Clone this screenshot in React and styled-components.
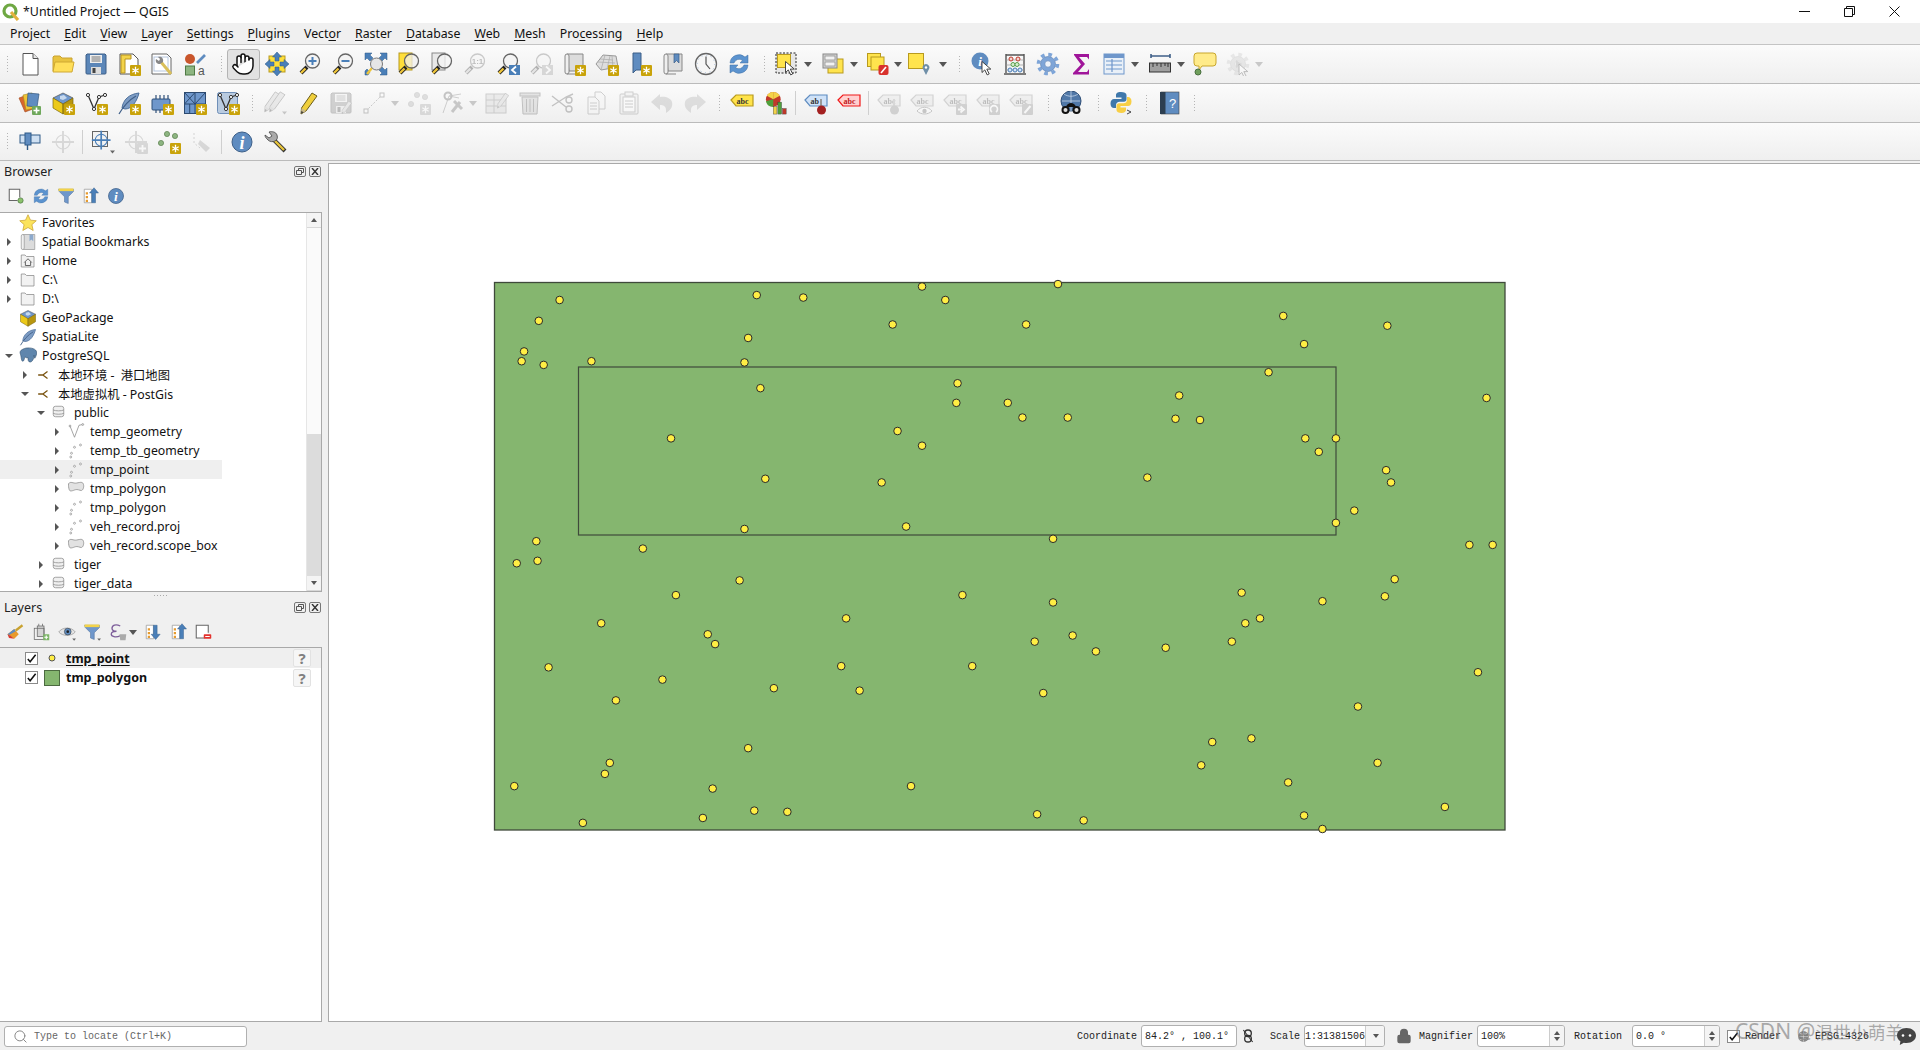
import React from "react";
import styled, { createGlobalStyle } from "styled-components";
import { Hand, Lock, Search } from "lucide-react";

const GlobalStyle = createGlobalStyle`
  html, body {
    margin: 0;
    padding: 0;
    overflow: hidden;
    background: #f0f0f0;
  }
  * { box-sizing: border-box; }
`;

const UI_FONT = `"Noto Sans", "Noto Sans CJK SC", sans-serif`;
const MONO_FONT = `"Liberation Mono", monospace`;

const Window = styled.div`
  width: 1920px;
  height: 1050px;
  display: flex;
  flex-direction: column;
  position: relative;
  overflow: hidden;
  font-family: ${UI_FONT};
  font-size: 13px;
  color: #111;
  background: #f0f0f0;
`;

/* title bar */
const TitleBar = styled.div`
  height: 23px;
  background: #fff;
  display: flex;
  align-items: center;
  padding-left: 2px;
  flex: none;
`;
const TitleText = styled.span`
  margin-left: 3px;
  font-size: 12.4px;
`;
const WinButtons = styled.div`
  margin-left: auto;
  display: flex;
  padding-right: 3px;
`;
const WinButton = styled.div`
  width: 45px;
  height: 21px;
  display: flex;
  align-items: center;
  justify-content: center;
`;

/* menu */
const MenuBar = styled.div`
  height: 22px;
  flex: none;
  display: flex;
  align-items: center;
  padding-left: 3px;
  background: #f0f0f0;
  border-bottom: 1px solid #c4c4c4;
`;
const MenuItem = styled.span`
  padding: 0 7px;
  font-size: 12.3px;
  u { text-underline-offset: 2px; }
`;

/* toolbars */
const ToolRow = styled.div`
  height: ${(p) => p.$h || 39}px;
  flex: none;
  display: flex;
  align-items: center;
  background: linear-gradient(#fbfbfb, #efefef);
  border-bottom: 1px solid #bbb;
`;
const Grip = styled.div`
  width: ${(p) => p.$w}px;
  height: 100%;
  flex: none;
  display: flex;
  align-items: center;
  justify-content: flex-end;
  padding-right: 4px;
  &::after {
    content: "";
    width: 3px;
    height: 19px;
    background-image: radial-gradient(circle, #b5b5b5 0.8px, transparent 0.9px);
    background-size: 3px 3px;
  }
`;
const Divider = styled.div`
  width: ${(p) => p.$w}px;
  height: 100%;
  flex: none;
  display: flex;
  align-items: center;
  justify-content: center;
  &::after {
    content: "";
    width: 1px;
    height: 24px;
    background: #cfcfcf;
  }
`;
const Tool = styled.div`
  width: ${(p) => p.$w || 33}px;
  height: 31px;
  flex: none;
  display: flex;
  align-items: center;
  border: 1px solid ${(p) => (p.$active ? "#b4b4b4" : "transparent")};
  border-radius: 3px;
  background: ${(p) => (p.$active ? "#e2e2e2" : "transparent")};
  padding-left: ${(p) => (p.$active ? 3 : 4)}px;
`;
const ToolFace = styled.div`
  width: 24px;
  height: 24px;
  flex: none;
  display: flex;
  ${(p) => p.$off && "filter: grayscale(1) opacity(0.32);"}
`;
const DropArrow = styled.div`
  width: 0;
  height: 0;
  flex: none;
  margin-left: ${(p) => p.$ml}px;
  border-left: 4px solid transparent;
  border-right: 4px solid transparent;
  border-top: 5px solid ${(p) => (p.$off ? "#c8c8c8" : "#555")};
`;

/* body */
const Body = styled.div`
  flex: 1;
  display: flex;
  min-height: 0;
  padding-top: 2px;
`;
const Side = styled.div`
  width: 322px;
  flex: none;
  display: flex;
  flex-direction: column;
`;
const DockHead = styled.div`
  height: 18px;
  flex: none;
  display: flex;
  align-items: center;
  padding: 0 0 2px 4px;
  font-size: 12.5px;
  color: #222;
`;
const DockBtns = styled.div`
  margin-left: auto;
  display: flex;
  gap: 3px;
  padding-right: 1px;
`;
const DockBtn = styled.div`
  width: 12px;
  height: 11px;
  border: 1px solid #777;
  border-radius: 2px;
  display: flex;
  align-items: center;
  justify-content: center;
`;
const DockTools = styled.div`
  height: ${(p) => p.$h}px;
  flex: none;
  display: flex;
  align-items: center;
  padding-bottom: ${(p) => (p.$h > 30 ? 1 : 0)}px;
`;
const DockTool = styled.div`
  width: ${(p) => p.$w}px;
  flex: none;
  display: flex;
  align-items: center;
  justify-content: flex-end;
`;
const TreeBox = styled.div`
  height: 380px;
  flex: none;
  display: flex;
  background: #fff;
  border: 1px solid #a9a9a9;
  border-left: 0;
`;
const TreeRows = styled.div`
  flex: 1;
  min-width: 0;
  overflow: hidden;
`;
const Row = styled.div`
  height: 19px;
  display: flex;
  align-items: center;
  position: relative;
  width: ${(p) => (p.$sel ? "222px" : "100%")};
  background: ${(p) => (p.$sel ? "#efefef" : "transparent")};
  padding-left: ${(p) => p.$lvl * 16 + 4}px;
  font-size: 12.3px;
`;
const Caret = styled.span`
  width: 10px;
  flex: none;
  display: flex;
  justify-content: center;
`;
const RowIcon = styled.span`
  width: 20px;
  margin-left: 4px;
  flex: none;
  display: flex;
  justify-content: center;
`;
const RowLabel = styled.span`
  margin-left: 4px;
  white-space: pre;
`;
const Scroll = styled.div`
  width: 15px;
  flex: none;
  display: flex;
  flex-direction: column;
  border-left: 1px solid #e6e6e6;
`;
const ScrollEnd = styled.div`
  height: 15px;
  flex: none;
  display: flex;
  align-items: center;
  justify-content: center;
  background: #f4f4f4;
  border-bottom: 1px solid #d8d8d8;
`;
const ScrollTrack = styled.div`
  height: ${(p) => p.$h}px;
  flex: none;
  background: #fafafa;
`;
const ScrollThumb = styled.div`
  flex: 1;
  background: #dcdcdc;
`;
const Splitter = styled.div`
  height: 7px;
  flex: none;
  display: flex;
  align-items: center;
  justify-content: center;
  &::after {
    content: "";
    width: 16px;
    height: 1px;
    background-image: radial-gradient(circle, #aaa 0.6px, transparent 0.7px);
    background-size: 3px 1px;
  }
`;
const LayerBox = styled.div`
  flex: 1;
  background: #fff;
  border: 1px solid #a9a9a9;
  border-left: 0;
`;
const LayerRow = styled.div`
  height: ${(p) => p.$h}px;
  display: flex;
  align-items: center;
  background: ${(p) => (p.$sel ? "#efefef" : "#fff")};
  padding-left: 25px;
  font-weight: 700;
  font-size: 12.5px;
  u { text-underline-offset: 2px; }
`;
const Check = styled.div`
  width: 13px;
  height: 13px;
  flex: none;
  border: 1px solid #8a8a8a;
  background: #fff;
  display: flex;
  align-items: center;
  justify-content: center;
`;
const Swatch = styled.div`
  width: 16px;
  height: 16px;
  margin-left: 6px;
  flex: none;
  display: flex;
  align-items: center;
  justify-content: center;
  ${(p) => p.$fill && `background: ${p.$fill}; border: 1px solid #4c6a40;`}
`;
const LayerName = styled.span`
  margin-left: 6px;
`;
const Unknown = styled.div`
  margin-left: auto;
  margin-right: 10px;
  width: 18px;
  height: 18px;
  border: 1px solid #e2e2e2;
  border-radius: 2px;
  background: #f6f6f6;
  display: flex;
  align-items: center;
  justify-content: center;
  font-weight: 700;
  font-size: 15px;
  color: #808080;
`;

/* map */
const MapCanvas = styled.div`
  width: 1592px;
  margin-left: 6px;
  flex: none;
  background: #fff;
  border: 1px solid #a9a9a9;
  border-right: 0;
  overflow: hidden;
  display: flex;
`;

/* status */
const StatusBar = styled.div`
  height: 28px;
  flex: none;
  display: flex;
  align-items: center;
  padding-left: 4px;
  font-family: ${MONO_FONT};
  font-size: 10px;
  color: #222;
`;
const Locator = styled.div`
  width: 243px;
  height: 21px;
  flex: none;
  display: flex;
  align-items: center;
  background: #fff;
  border: 1px solid #b0b0b0;
  border-radius: 3px;
  padding-left: 8px;
  color: #666;
  gap: 6px;
`;
const StatLabel = styled.span`
  margin-left: ${(p) => p.$ml}px;
  flex: none;
`;
const Field = styled.div`
  width: ${(p) => p.$w}px;
  height: 22px;
  margin-left: ${(p) => p.$ml || 4}px;
  flex: none;
  display: flex;
  align-items: center;
  background: #fff;
  border: 1px solid #b0b0b0;
  border-radius: 3px;
  overflow: hidden;
  padding-left: ${(p) => (p.$pad === undefined ? 3 : p.$pad)}px;
  white-space: pre;
`;
const FieldEnd = styled.div`
  margin-left: auto;
  width: ${(p) => p.$w}px;
  height: 100%;
  flex: none;
  border-left: 1px solid #ccc;
  background: #f4f4f4;
  display: flex;
  flex-direction: column;
  align-items: center;
  justify-content: center;
  gap: 2px;
`;
const Arrow = styled.div`
  width: 0;
  height: 0;
  border-left: 3.5px solid transparent;
  border-right: 3.5px solid transparent;
  ${(p) => (p.$up ? "border-bottom" : "border-top")}: 4px solid #555;
`;
const StatIcon = styled.div`
  margin-left: ${(p) => p.$ml}px;
  flex: none;
  display: flex;
`;
const StatCheck = styled(Check)`
  margin-left: 7px;
`;
const Watermark = styled.div`
  position: absolute;
  left: 1735px;
  bottom: 5px;
  font-family: ${UI_FONT};
  font-size: 21px;
  line-height: 26px;
  white-space: pre;
  color: rgba(120, 120, 120, 0.6);
`;
const WatermarkName = styled.span`
  font-size: 17.5px;
`;
const WatermarkBubble = styled.div`
  position: absolute;
  left: 1897px;
  top: 1028px;
  display: flex;
`;

/* ---- icon parts ---- */
const txt = { fontFamily: "Liberation Sans, sans-serif" };
const smallDrop = <path d="M19 20.500h5l-2.500 3z" fill="#666" />;
const badge = (
  <g>
    <rect x="13" y="13" width="11" height="11" rx="1" fill="#c9a30a" />
    <path d="M18.500 14.800v7.400M15.300 16.700l6.400 3.600M21.700 16.700l-6.400 3.600" stroke="#fff" strokeWidth="1.300" />
  </g>
);
const mag = (fill = "#f4f4f4") => (
  <g>
    <path d="M9 15L3 21" stroke="#222" strokeWidth="4" />
    <path d="M7.500 16.500L3 21" stroke="#eec53a" strokeWidth="2.400" />
    <circle cx="14.500" cy="9" r="7" fill={fill} stroke="#666" strokeWidth="1.300" />
  </g>
);
const cursor = (x, y) => (
  <path transform={`translate(${x} ${y})`} d="M0 0v11l2.800-2.600 2.400 5 2-1-2.400-4.800h4z" fill="#fff" stroke="#333" strokeWidth=".9" />
);
const scroll = (
  <g>
    <path d="M5 2h16v17H7z" fill="#dcdcdc" stroke="#888" />
    <rect x="3" y="2" width="4" height="20" rx="2" fill="#efefef" stroke="#888" />
    <path d="M5 22h10" stroke="#888" />
  </g>
);
const floppy = (
  <g>
    <path d="M3 2h18l1 1v18a1 1 0 0 1-1 1H3a1 1 0 0 1-1-1V3z" fill="#5b86b8" stroke="#3d5f88" />
    <rect x="6" y="3" width="12" height="8" fill="#eee" />
    <path d="M7.500 5h9M7.500 7h9M7.500 9h9" stroke="#777" />
    <rect x="7" y="15" width="10" height="7" fill="#ddd" />
    <rect x="8.500" y="16" width="3" height="5" fill="#444" />
  </g>
);
const pencil = (
  <g>
    <path d="M16 2l5 3-11 15-5 3 .5-6z" fill="#f0cf3c" stroke="#6a5c1c" />
    <path d="M5 23l.5-6 4.500 3z" fill="#c9b98a" />
    <path d="M5 23l.4-3 2 1.300z" fill="#333" />
  </g>
);
const tag = (fill, stroke, label, color) => (
  <g>
    <path d="M1 9l5-5h17v11H6z" fill={fill} stroke={stroke} strokeWidth="1.200" />
    <text x="6.500" y="12.500" fontSize="8" fontWeight="700" fontFamily="Liberation Serif, serif" fill={color}>{label}</text>
  </g>
);
const grayTag = (extra) => (
  <g>
    {tag("#ddd", "#888", "abc", "#444")}
    {extra}
  </g>
);
const gearShape = (fill, edge) => (
  <g>
    <circle cx="12" cy="12" r="9.500" fill="none" stroke={fill} strokeWidth="3.600" strokeDasharray="3.700 3.760" />
    <circle cx="12" cy="12" r="7.500" fill={fill} stroke={edge} strokeWidth=".6" />
    <circle cx="12" cy="12" r="3.200" fill="#eef3fa" stroke={edge} strokeWidth=".6" />
  </g>
);
const crosshair = (c) => (
  <g fill="none" stroke={c}>
    <circle cx="12" cy="12" r="7" strokeWidth="1.200" />
    <path d="M12 1v22M1 12h22" strokeWidth="2" />
  </g>
);
const vNodes = (
  <g>
    <path d="M4 4l6 14 5-12 6-2" fill="none" stroke="#333" strokeWidth="1.300" />
    <g fill="#fff" stroke="#333">
      <circle cx="4" cy="4" r="1.600" />
      <circle cx="10" cy="18" r="1.600" />
      <circle cx="15" cy="6" r="1.600" />
      <circle cx="21" cy="4" r="1.600" />
    </g>
  </g>
);
const dots = (c = "#8db581", edge = "#5a7f4d") => (
  <g fill={c} stroke={edge} strokeWidth=".7">
    <circle cx="4" cy="13" r="2.600" />
    <circle cx="10" cy="4" r="2.600" />
    <circle cx="18" cy="6" r="2.600" />
  </g>
);
const featherShape = (
  <g>
    <path d="M22 2C12 3 6 9 5 17l3 1C15 18 20 10 22 2z" fill="#7d9cc4" stroke="#4c6f9b" />
    <path d="M2 23C6 16 12 9 19 5" fill="none" stroke="#3f5f88" strokeWidth="1.200" />
  </g>
);
const gpkgBox = (
  <g>
    <path d="M12 2l10 5-10 6L2 7z" fill="#6f97cb" stroke="#555" strokeWidth=".7" />
    <path d="M9 5l4-1 3 3-4 2-3-1z" fill="#c7d9ee" />
    <path d="M2 7l10 6v10L2 17z" fill="#ecc918" stroke="#7a6810" strokeWidth=".7" />
    <path d="M22 7l-10 6v10l10-6z" fill="#b8960f" stroke="#7a6810" strokeWidth=".7" />
  </g>
);
const tree = (arrowUp) => (
  <g>
    <path d="M3 3h10v18H3z" fill="#fff" stroke="#999" />
    <g fill="#e69b2f">
      <rect x="5" y="7" width="3" height="3" />
      <rect x="5" y="12" width="3" height="3" />
      <rect x="5" y="17" width="3" height="3" />
    </g>
    <path d={arrowUp ? "M16 1l6 7h-4v13h-5V8h-3z" : "M15.500 22l6-7h-4V3h-5v12h-3z"} fill="#4a7fb8" stroke="#2f5a88" strokeWidth=".6" />
  </g>
);
const funnel = (
  <g>
    <path d="M2 3h20v3l-7 7v9l-5-2v-7L3 6z" fill="#6f97cb" stroke="#4c6f9b" strokeWidth=".7" />
    <rect x="2" y="2" width="20" height="3.500" fill="#f3d34a" />
  </g>
);
const polygonShape = (
  <path d="M2 5c3-4 6 0 11-1s8-2 9 2-1 8-3 8-5-2-8-1-7 3-8 0-1-5-1-8z" fill="#e2e2e2" stroke="#888" />
);
const pointsShape = (
  <g fill="#fff" stroke="#888" strokeWidth=".9">
    <circle cx="5" cy="20" r="1.300" />
    <circle cx="6" cy="15" r="1.300" />
    <circle cx="10" cy="7" r="1.300" />
    <circle cx="18" cy="4" r="1.300" />
  </g>
);
const dbShape = (
  <g fill="#f0f0f0" stroke="#888">
    <rect x="3" y="3" width="14" height="14" rx="3" />
    <path d="M3 8c3 1.500 11 1.500 14 0M3 12.500c3 1.500 11 1.500 14 0" fill="none" />
  </g>
);
const folderShape = (
  <path d="M3 4h5l2 2h10v14H3z" fill="#f2f2f2" stroke="#888" />
);
const info = (size = 20) => (
  <g>
    <circle cx="12" cy="12" r={size / 2} fill="#5f8cc0" stroke="#3d5f88" />
    <text x="12" y={12 + size * 0.33} textAnchor="middle" fontSize={size * 0.9} fontWeight="700" fontStyle="italic" fontFamily="Liberation Serif, serif" fill="#fff">i</text>
  </g>
);
const refresh = (
  <g fill="#5b93cf" stroke="#3f6fa3" strokeWidth=".5">
    <path d="M3 11a9 9 0 0 1 15-6l3-2v8h-8l2.500-2.600A5.500 5.500 0 0 0 7 11z" />
    <path d="M21 13a9 9 0 0 1-15 6l-3 2v-8h8l-2.500 2.600A5.500 5.500 0 0 0 17 13z" />
  </g>
);

const ICONS = {
  new: (
    <g>
      <path d="M5 1.500h10l5 5V23H5z" fill="#fff" stroke="#555" />
      <path d="M15 1.500v5h5" fill="#e6e6e6" stroke="#555" />
    </g>
  ),
  open: (
    <g>
      <path d="M2 19V5l1-1h6l2 2h10v4" fill="#e8c33f" stroke="#c9a230" />
      <path d="M2 20l2-10h19l-2 10z" fill="#ffdf5a" stroke="#cfa832" />
    </g>
  ),
  save: floppy,
  layout: (
    <g>
      <path d="M3 2h13l5 5v15H3z" fill="#fff" stroke="#555" />
      <path d="M4 3h10v4H8v14H4z" fill="#f3d34a" stroke="#b8941e" />
      {badge}
    </g>
  ),
  layoutMgr: (
    <g>
      <path d="M2 2h15l4 4v16H2z" fill="#fff" stroke="#666" />
      <rect x="4" y="5" width="14" height="14" fill="none" stroke="#b5c6de" />
      <path d="M11 10l10 12" stroke="#d9bf5a" strokeWidth="3" />
      <path d="M8 5c3-1 6 1 5 5l-3 2c-3 0-5-2-4-5l3 2 1-2z" fill="#888" />
    </g>
  ),
  style: (
    <g>
      <circle cx="7" cy="7" r="5" fill="#c9562c" />
      <path d="M14 11l8-8" stroke="#5f8cc0" strokeWidth="2.600" />
      <rect x="2.500" y="14" width="9" height="9" fill="#8db581" stroke="#4f7a45" />
      <text x="15" y="22.500" fontSize="12" fill="#555" style={txt}>a</text>
    </g>
  ),
  hand: <Hand x="0" y="0" width="24" height="24" fill="#fff" stroke="#111" strokeWidth="1.500" />,
  panSel: (
    <g>
      <rect x="4" y="4" width="16" height="16" fill="#ffdf3a" stroke="#b89a1e" />
      <g fill="#4a7fb8" stroke="#2f5a88" strokeWidth=".5">
        <path d="M12 0l4.500 5H14v4h-4V5H7.500z" />
        <path d="M12 24l4.500-5H14v-4h-4v4H7.500z" />
        <path d="M0 12l5-4.500V10h4v4H5v2.500z" />
        <path d="M24 12l-5-4.500V10h-4v4h4v2.500z" />
      </g>
    </g>
  ),
  zoomIn: (
    <g>
      {mag()}
      <path d="M14.500 5v8M10.500 9h8" stroke="#4a7fb8" strokeWidth="2" />
    </g>
  ),
  zoomOut: (
    <g>
      {mag()}
      <path d="M10.500 9h8" stroke="#4a7fb8" strokeWidth="2" />
    </g>
  ),
  zoomFull: (
    <g>
      <g fill="#4a7fb8" stroke="#2f5a88" strokeWidth=".5">
        <path d="M1 1h7l-2 2 3 3-3 3-3-3-2 2z" />
        <path d="M23 1h-7l2 2-3 3 3 3 3-3 2 2z" />
        <path d="M23 23h-7l2-2-3-3 3-3 3 3 2-2z" />
        <path d="M1 23h3l2-3-3-3-2 2z" />
      </g>
      <path d="M8 16l-5 6" stroke="#eec53a" strokeWidth="2.400" />
      <circle cx="12.500" cy="12" r="6" fill="#e6e6e6" stroke="#777" />
    </g>
  ),
  zoomSel: (
    <g>
      <rect x="2" y="1" width="13" height="17" fill="#ffdf3a" stroke="#b89a1e" />
      {mag("rgba(240,240,240,.75)")}
    </g>
  ),
  zoomLayer: (
    <g>
      <rect x="2" y="1" width="13" height="17" fill="#e8e8e8" stroke="#888" />
      {mag("rgba(245,245,245,.75)")}
    </g>
  ),
  zoom11: (
    <g>
      {mag()}
      <text x="14.500" y="12" textAnchor="middle" fontSize="8" fontWeight="700" fill="#444" style={txt}>1:1</text>
    </g>
  ),
  zoomLast: (
    <g>
      {mag()}
      <rect x="13" y="13" width="11" height="10" fill="#4a7fb8" />
      <path d="M20 14.500L16 18l4 3.500" fill="none" stroke="#fff" strokeWidth="1.800" />
    </g>
  ),
  zoomNext: (
    <g>
      {mag()}
      <rect x="13" y="13" width="11" height="10" fill="#999" />
      <path d="M17 14.500L21 18l-4 3.500" fill="none" stroke="#fff" strokeWidth="1.800" />
    </g>
  ),
  newMap: (
    <g>
      {scroll}
      {badge}
    </g>
  ),
  map3d: (
    <g>
      <path d="M1 12L8 3l13 1 2 11-17 3z" fill="#ddd" stroke="#999" />
      <path d="M5 7l13 1M3 10l17 1M6 18L10 3M12 17l3-13M18 16l-1-12" stroke="#aaa" strokeWidth=".7" fill="none" />
      {badge}
    </g>
  ),
  newBook: (
    <g>
      <path d="M5 1h8v17l-5 0-3 3z" fill="#5f8cc0" stroke="#3d5f88" />
      {badge}
    </g>
  ),
  books: (
    <g>
      {scroll}
      <path d="M13 2h5v9l-2.500-2.500L13 11z" fill="#5f8cc0" stroke="#3d5f88" strokeWidth=".7" />
    </g>
  ),
  clock: (
    <g>
      <circle cx="12" cy="12" r="10.500" fill="#f6f6f6" stroke="#666" strokeWidth="1.300" />
      <path d="M12 4.500V12l4 5" fill="none" stroke="#555" strokeWidth="1.200" />
      <circle cx="12" cy="12" r="8.800" fill="none" stroke="#9fb7d4" strokeWidth="1" strokeDasharray="1 3.600" />
    </g>
  ),
  refresh,
  select: (
    <g>
      <rect x="1" y="1" width="20" height="20" fill="#e6e6e6" stroke="#222" strokeDasharray="2 1.500" />
      <rect x="2.500" y="2.500" width="13" height="13" fill="#ffe44d" stroke="#b89a1e" />
      {cursor(10.500, 9.500)}
    </g>
  ),
  selAttr: (
    <g>
      <rect x="7" y="7" width="15" height="14" fill="#ffe44d" stroke="#b89a1e" />
      <rect x="2" y="2" width="14" height="14" fill="#d4d4d4" stroke="#888" />
      <rect x="4" y="4" width="10" height="4" fill="#f2f2f2" stroke="#888" strokeWidth=".7" />
      <rect x="4" y="10" width="10" height="4" fill="#f2f2f2" stroke="#888" strokeWidth=".7" />
    </g>
  ),
  deselect: (
    <g>
      <rect x="1.500" y="1.500" width="13" height="13" fill="#ffe44d" stroke="#b89a1e" />
      <rect x="5" y="5" width="13" height="13" fill="#ffe44d" stroke="#b89a1e" />
      <rect x="12.500" y="13" width="10" height="10" rx="2" fill="#d8322d" />
      <path d="M15 21l5-6" stroke="#fff" strokeWidth="1.600" />
    </g>
  ),
  selLoc: (
    <g>
      <rect x="1.500" y="1.500" width="15" height="15" fill="#ffe44d" stroke="#b89a1e" />
      <path d="M19 23l-3-6a3.400 3.400 0 1 1 6 0z" fill="#6f8fa8" />
      <circle cx="19" cy="15.500" r="1.200" fill="#fff" />
    </g>
  ),
  identify: (
    <g>
      <circle cx="10" cy="9" r="8.500" fill="#5f8cc0" />
      <text x="10" y="13.500" textAnchor="middle" fontSize="13" fontWeight="700" fontStyle="italic" fontFamily="Liberation Serif, serif" fill="#fff">i</text>
      {cursor(12, 9.500)}
    </g>
  ),
  abacus: (
    <g>
      <path d="M3 2v19M21 2v19M3 3h18M1 22h22" stroke="#555" strokeWidth="1.400" fill="none" />
      <path d="M3 8h18M3 13h18M3 18h18" stroke="#999" strokeWidth=".7" />
      <g fill="#f4d4d0" stroke="#c0392b"><circle cx="8" cy="7" r="2" /><circle cx="15" cy="7" r="2" /></g>
      <g fill="#d7efd0" stroke="#5a9f4d"><circle cx="10" cy="12.500" r="2" /><circle cx="14" cy="12.500" r="2" /></g>
      <g fill="#d5e3f5" stroke="#4a7fb8"><circle cx="7" cy="18" r="2" /><circle cx="12" cy="18" r="2" /><circle cx="17" cy="18" r="2" /></g>
    </g>
  ),
  gear: gearShape("#7ea5d8", "#5b80b0"),
  sigma: <path d="M5 2h15v5.500l-2-2.500H10l6 7-7 8h9l2-3v5.500H4v-1.500l8-8.500L5 3z" fill="#a0159a" />,
  table: (
    <g>
      <rect x="2" y="2" width="20" height="20" fill="#e9f0f8" stroke="#6f97cb" />
      <rect x="2" y="2" width="20" height="4" fill="#6f97cb" />
      <path d="M4 9h16M4 13h16M4 17h16M10 7v13" stroke="#6f97cb" strokeWidth="1.200" />
    </g>
  ),
  ruler: (
    <g>
      <path d="M3 4h19M3 2v4M22 2v4" stroke="#3f5f88" strokeWidth="1.600" />
      <rect x="1.500" y="11" width="21" height="9" fill="#a0a0a0" stroke="#333" />
      <path d="M5 11v4M9 11v3M13 11v4M17 11v3M20 11v4" stroke="#333" />
    </g>
  ),
  annot: (
    <g>
      <path d="M4 1h16a3 3 0 0 1 3 3v7a3 3 0 0 1-3 3H9l-3 4v-4H4a3 3 0 0 1-3-3V4a3 3 0 0 1 3-3z" fill="#ffeb8a" stroke="#c8a62d" />
      <circle cx="5" cy="20" r="3" fill="#6f9f5c" stroke="#4a7040" />
    </g>
  ),
  playGear: (
    <g>
      {gearShape("#c4c4c4", "#999")}
      <path d="M10 8l6 4-6 4z" fill="#999" />
      {cursor(13, 12)}
    </g>
  ),
  dataSrc: (
    <g>
      <path d="M1 7l8-3 6 14-8 3z" fill="#d8662c" stroke="#a04a20" strokeWidth=".6" />
      <path d="M5 4l9-2 3 15-9 2z" fill="#edc436" stroke="#a98b20" strokeWidth=".6" />
      <path d="M10 2l11 1-2 13-10-1z" fill="#5f8cc0" stroke="#34587f" strokeWidth=".7" />
      <rect x="14" y="15" width="9" height="9" rx="1" fill="#6fa85c" />
      <path d="M18.500 16.500v6M15.500 19.500h6" stroke="#fff" strokeWidth="1.600" />
    </g>
  ),
  gpkg: (
    <g>
      {gpkgBox}
      {badge}
    </g>
  ),
  newShape: (
    <g>
      {vNodes}
      {badge}
    </g>
  ),
  feather: (
    <g>
      {featherShape}
      {badge}
    </g>
  ),
  chip: (
    <g>
      <rect x="2" y="8" width="18" height="11" rx="1" fill="#6f97cb" stroke="#2f507a" />
      <path d="M6 4v4M10 4v4M14 4v4M18 4v4M6 19v3M10 19v3" stroke="#2f507a" strokeWidth="1.200" />
      {badge}
    </g>
  ),
  mesh: (
    <g>
      <rect x="1.500" y="1.500" width="21" height="21" fill="#6f97cb" stroke="#2c4a70" />
      <path d="M1.500 13h21M12 1.500v21M1.500 1.500L12 13M12 1.500L1.500 13M22.500 1.500L12 13M6.700 13v9.500" stroke="#2c4a70" fill="none" />
      {badge}
    </g>
  ),
  virtual: (
    <g>
      <rect x="1.500" y="1.500" width="20" height="21" rx="2" fill="#b9cbe0" stroke="#6f8fb8" />
      {vNodes}
      {badge}
    </g>
  ),
  pencils: (
    <g>
      <g transform="translate(-3 -1) scale(.95)">{pencil}</g>
      <g transform="translate(2 -1) scale(.95)">{pencil}</g>
      {smallDrop}
    </g>
  ),
  pencil,
  saveEdit: (
    <g>
      {floppy}
      <g transform="translate(10 9) scale(.6)">{pencil}</g>
    </g>
  ),
  digit: (
    <g>
      <path d="M4 20L20 4" stroke="#666" strokeDasharray="2 1.500" />
      <rect x="2" y="18" width="4" height="4" fill="#fff" stroke="#555" />
      <rect x="18" y="2" width="4" height="4" fill="#fff" stroke="#555" />
    </g>
  ),
  dotsBadge: (
    <g>
      {dots("#aaa", "#888")}
      {badge}
    </g>
  ),
  dotsBadgeGreen: (
    <g>
      {dots()}
      {badge}
    </g>
  ),
  tools: (
    <g>
      <path d="M3 22L9 5M9 5l10 2M9 5l12-2" stroke="#777" strokeWidth="1" fill="none" />
      <circle cx="8" cy="5" r="3.500" fill="none" stroke="#555" strokeWidth="2" />
      <path d="M12 21l8-10" stroke="#666" strokeWidth="3" />
      <path d="M14 10l8 8" stroke="#666" strokeWidth="3" />
    </g>
  ),
  editTable: (
    <g>
      <rect x="1" y="3" width="20" height="19" fill="#d8d0a8" stroke="#777" />
      <path d="M1 9h20M1 15h20M9 3v19" stroke="#777" />
      <g transform="translate(9 1) scale(.7)">{pencil}</g>
    </g>
  ),
  trash: (
    <g fill="#cdb5a8" stroke="#6a4a3a">
      <rect x="2" y="2" width="20" height="3" />
      <path d="M4 6h16l-1 17H5z" />
      <path d="M8.500 8v13M12 8v13M15.500 8v13" fill="none" />
    </g>
  ),
  scissors: (
    <g fill="none" stroke="#555" strokeWidth="1.400">
      <path d="M1 5l14 11M1 15l14-9 7-3" />
      <circle cx="18" cy="18" r="3" />
      <circle cx="18" cy="9" r="3" />
    </g>
  ),
  copy: (
    <g stroke="#777" fill="#f4f4f4">
      <path d="M11 1h6l4 4v13H11z" />
      <path d="M4 6h7l4 4v13H4z" />
      <path d="M6 12h7M6 15h7M6 18h7" fill="none" />
    </g>
  ),
  paste: (
    <g stroke="#777" fill="#e8e8e8">
      <rect x="3" y="3" width="18" height="20" rx="1" />
      <rect x="6" y="6" width="12" height="15" fill="#fff" />
      <rect x="8" y="1" width="8" height="4" />
      <path d="M8 10h8M8 13h8M8 16h8" fill="none" />
    </g>
  ),
  undo: <path d="M10 3L1 11l9 8v-5c3 0 6 1 6 5v3c5-3 7-7 6-11-1-4-7-6-12-5z" fill="#a9a49c" />,
  redo: <path d="M14 3l9 8-9 8v-5c-3 0-6 1-6 5v3c-5-3-7-7-6-11 1-4 7-6 12-5z" fill="#a9a9a9" />,
  label: tag("#ffe34a", "#b89a1e", "abc", "#333"),
  diagram: (
    <g transform="translate(2 1) scale(.92)">
      <circle cx="9" cy="8" r="8" fill="#c0392b" />
      <path d="M9 8V0a8 8 0 0 1 7 4z" fill="#f3d34a" />
      <path d="M9 8L2 4a8 8 0 0 1 7-4z" fill="#f3d34a" />
      <path d="M9 8l-8 2a8 8 0 0 0 8 6z" fill="#4fa03c" />
      <rect x="9" y="16" width="4" height="8" fill="#f3d34a" stroke="#333" strokeWidth=".4" />
      <rect x="14" y="11" width="4" height="13" fill="#4fa03c" stroke="#333" strokeWidth=".4" />
      <rect x="19" y="18" width="4" height="6" fill="#c0392b" stroke="#333" strokeWidth=".4" />
    </g>
  ),
  tagPin: (
    <g>
      {tag("#cfe2f8", "#5f8cc0", "ab", "#333")}
      <path d="M17 8v9" stroke="#999" strokeWidth="2" />
      <circle cx="17.500" cy="19" r="4.500" fill="#a32020" />
    </g>
  ),
  tagRed: tag("#ffd0d0", "#f01818", "abc", "#c01818"),
  tagPinOff: grayTag(
    <g>
      <path d="M17 8v9" stroke="#999" strokeWidth="2" />
      <circle cx="17.500" cy="19" r="4.500" fill="#888" />
    </g>
  ),
  tagEye: grayTag(
    <g>
      <path d="M7 20c4-5 11-5 15 0-4 4-11 4-15 0z" fill="#fff" stroke="#666" />
      <circle cx="14.500" cy="20" r="2.200" fill="#666" />
    </g>
  ),
  tagArrow: grayTag(
    <g>
      <rect x="13" y="13" width="11" height="11" rx="1" fill="#888" />
      <path d="M15 18.500h4M17.500 15.500l3.500 3-3.500 3" stroke="#fff" strokeWidth="1.800" fill="none" />
    </g>
  ),
  tagRot: grayTag(
    <g>
      <rect x="13" y="13" width="11" height="11" rx="1" fill="#888" />
      <path d="M16 21a3.500 3.500 0 1 1 4 0" stroke="#fff" strokeWidth="1.600" fill="none" />
    </g>
  ),
  tagPen: grayTag(
    <g>
      <rect x="13" y="13" width="11" height="11" rx="1" fill="#888" />
      <path d="M15.500 22l6-7" stroke="#fff" strokeWidth="2" />
    </g>
  ),
  globe: (
    <g>
      <circle cx="12" cy="10" r="10" fill="#5078a8" stroke="#2f4f78" />
      <path d="M3 10h18M12 0v20M5 3c4 3 10 3 14 0M5 17c4-3 10-3 14 0" stroke="#c5d5e8" fill="none" strokeWidth=".8" />
      <path d="M7 16c1-3 3-4 5-4s4 1 5 4" fill="#111" />
      <circle cx="6.500" cy="19" r="4" fill="#111" />
      <circle cx="17.500" cy="19" r="4" fill="#111" />
      <circle cx="6.500" cy="19" r="2" fill="#ddd" />
      <circle cx="17.500" cy="19" r="2" fill="#ddd" />
    </g>
  ),
  python: (
    <g>
      <path d="M12 1C8 1 7 2.500 7 4v2.500h5.500V8H5c-2 0-3.500 1.500-3.500 4.500S3 17 5 17h2v-3c0-2 1.500-3.300 3.500-3.300h4.500c1.500 0 2.500-1 2.500-2.500V4c0-2-2.500-3-5.500-3z" fill="#3f78ab" />
      <path d="M12.500 22c3 0 4.500-1.500 4.500-3v-2.500h-5.500V15H19c2 0 3.500-1.500 3.500-4.500S21 6 19 6h-1v3c0 2-1.500 3.300-3.500 3.300H10c-1.500 0-2.500 1-2.500 2.500V19c0 2 2 3 5 3z" fill="#f8cf45" />
      <path d="M18 19l4 2-4 2" fill="none" stroke="#444" />
    </g>
  ),
  help: (
    <g>
      <rect x="4" y="1" width="18" height="22" fill="#5f8cc0" stroke="#444" strokeWidth=".6" />
      <rect x="3" y="1" width="5.500" height="22" fill="#2c3e50" />
      <text x="15.500" y="16.500" textAnchor="middle" fontSize="13" fill="#fff" style={txt}>?</text>
    </g>
  ),
  moveDiag: (
    <g>
      <rect x="2" y="5" width="20" height="8" fill="#cfe0f2" stroke="#2f5a88" />
      <rect x="7" y="3" width="6" height="12" fill="#5f8cc0" stroke="#2f5a88" />
      <path d="M9.500 15v5" stroke="#2f5a88" strokeWidth="1.400" />
    </g>
  ),
  cross: crosshair("#999"),
  crossBlue: (
    <g>
      <rect x="1.500" y="1.500" width="15" height="15" fill="#f2f2f2" stroke="#666" />
      <g transform="translate(0 0) scale(.85)">{crosshair("#4a7fb8")}</g>
      {smallDrop}
    </g>
  ),
  crossPlus: (
    <g>
      {crosshair("#999")}
      <rect x="13" y="13" width="11" height="11" rx="1" fill="#999" />
      <path d="M18.500 15v7M15 18.500h7" stroke="#fff" strokeWidth="1.800" />
    </g>
  ),
  pathOff: (
    <g>
      <path d="M4 3v10l6 5" stroke="#888" strokeDasharray="2 2" fill="none" />
      <path d="M10 10l10 8-4 4-8-8z" fill="#999" />
    </g>
  ),
  info: info(20),
  wrench: (
    <g>
      <path d="M10 9l12 12" stroke="#333" strokeWidth="4" />
      <path d="M11 10l10 10" stroke="#e8c53a" strokeWidth="2.400" />
      <path d="M2 5l4 3 3-2-3-4c3-1 7 0 8 3s0 5-2 6-5 1-7-1-3-3-3-5z" fill="#aaa" stroke="#444" strokeWidth=".8" />
    </g>
  ),
  addSquare: (
    <g>
      <path d="M17 14V3H3v15h11" fill="#fff" stroke="#666" strokeWidth="1.400" />
      <circle cx="18" cy="18" r="3.500" fill="#8cc26c" stroke="#4f7a45" />
    </g>
  ),
  filter: funnel,
  filterDrop: (
    <g>
      {funnel}
      {smallDrop}
    </g>
  ),
  collapse: tree(true),
  expand: tree(false),
  removeSquare: (
    <g>
      <path d="M19 13V3H3v17h11" fill="#fff" stroke="#666" strokeWidth="1.400" />
      <rect x="13" y="15" width="10" height="6" rx="1" fill="#e2322d" />
      <path d="M15 18h6" stroke="#fff" strokeWidth="1.400" />
    </g>
  ),
  brush: (
    <g>
      <path d="M2 15l9-7 6 7-6 6z" fill="#e89a2c" />
      <path d="M2 15l9-7 2 3-9 5z" fill="#5f8cc0" />
      <path d="M2 15l4 2 5 4-7-1z" fill="#d83c30" />
      <path d="M13 10l9-7" stroke="#c9a230" strokeWidth="3" />
    </g>
  ),
  addGroup: (
    <g>
      <path d="M9 1v5M14 1v5" stroke="#666" />
      <rect x="7" y="4" width="9" height="14" fill="#d4d4d4" stroke="#666" />
      <rect x="3" y="7" width="13" height="15" fill="none" stroke="#666" />
      <rect x="15" y="15" width="8" height="8" fill="#7cb567" />
      <path d="M19 16.500v5M16.500 19h5" stroke="#fff" strokeWidth="1.500" />
    </g>
  ),
  eye: (
    <g>
      <path d="M1 12c5-7 17-7 22 0-5 6-17 6-22 0z" fill="#e4e4e4" stroke="#999" />
      <circle cx="13" cy="11.500" r="4.500" fill="#5f8cc0" stroke="#333" strokeWidth=".7" />
      <circle cx="13" cy="11.500" r="1.800" fill="#222" />
      {smallDrop}
    </g>
  ),
  epsilon: (
    <g>
      <path d="M15 4C9 1 4 3 4 7c0 3 3 4 6 4-4 0-7 1-7 4s6 5 12 2" fill="none" stroke="#7d5d9a" strokeWidth="1.800" />
      <path d="M14 15h9l-1 8h-7z" fill="#aaa" />
    </g>
  ),
  star: <path d="M12 1l3.300 7.200 7.700.8-5.800 5.200 1.700 7.800L12 18l-6.900 4 1.700-7.800L1 9l7.700-.8z" fill="#fbe35c" stroke="#c9a230" />,
  scrollSmall: (
    <g>
      <path d="M5 2h16v20H5z" fill="#dcdcdc" stroke="#999" />
      <rect x="3" y="2" width="4" height="20" rx="2" fill="#f0f0f0" stroke="#999" />
      <path d="M14 2h5v9l-2.500-2.500L14 11z" fill="#8ca9cc" />
    </g>
  ),
  home: (
    <g>
      {folderShape}
      <path d="M7 14l5-5 5 5M8.500 13v5h7v-5" fill="none" stroke="#555" strokeWidth="1.200" />
    </g>
  ),
  folder: folderShape,
  gpkgIcon: gpkgBox,
  featherIcon: featherShape,
  elephant: (
    <g>
      <path d="M5 3c5-3 14-2 17 1s1 8-1 11l-1-4c0 4-2 9-5 9s-3-3-3-6c-2 1-3 0-4-1-1 2-1 6-3 6s-2-6-3-9-1-5 3-7z" fill="#5f86ad" stroke="#2f4f6f" strokeWidth=".8" />
    </g>
  ),
  conn: <path d="M2 12h8M10 12l8-6M10 12l8 6" fill="none" stroke="#7a5410" strokeWidth="2.200" />,
  db: dbShape,
  lineLayer: (
    <g fill="none" stroke="#888">
      <path d="M4 4l6 15 6-16 5-1" />
      <circle cx="4" cy="4" r="1.200" fill="#fff" />
      <circle cx="21" cy="2" r="1.200" fill="#fff" />
    </g>
  ),
  points: pointsShape,
  polygonLayer: polygonShape,
  crsOff: (
    <g>
      <circle cx="12" cy="8" r="5" fill="none" stroke="#333" strokeWidth="2" />
      <circle cx="12" cy="16" r="5" fill="none" stroke="#333" strokeWidth="2" />
      <path d="M5 3l14 18" stroke="#333" strokeWidth="1.600" />
    </g>
  ),
  epsg: (
    <g>
      <circle cx="12" cy="12" r="10" fill="#8a8a8a" />
      <path d="M3 12h18M12 2v20M5 6c4 2 10 2 14 0M5 18c4-2 10-2 14 0" stroke="#ddd" fill="none" />
    </g>
  ),
  tick: <path d="M4 13l5 6L21 4" fill="none" stroke="#111" strokeWidth="3.400" />,
};

const Glyph = ({ n, s = 24 }) => (
  <svg viewBox="0 0 24 24" width={s} height={s}>
    {ICONS[n]}
  </svg>
);

/* ---- toolbars as data ---- */
// g: grip, s: divider, t: tool, x: disabled tool, d: tool with menu arrow
const ROW_ONE = [
  ["g", 13], ["t", "new"], ["t", "open"], ["t", "save"], ["t", "layout"], ["t", "layoutMgr"], ["t", "style"],
  ["g", 16], ["a", "hand"], ["t", "panSel"], ["t", "zoomIn"], ["t", "zoomOut"], ["t", "zoomFull"], ["t", "zoomSel"],
  ["t", "zoomLayer"], ["x", "zoom11"], ["t", "zoomLast"], ["x", "zoomNext"], ["t", "newMap"], ["t", "map3d"],
  ["t", "newBook"], ["t", "books"], ["t", "clock"], ["t", "refresh"],
  ["g", 15], ["d", "select", 46, 1], ["d", "selAttr", 45, 1], ["d", "deselect", 41, 0], ["d", "selLoc", 48, 4],
  ["g", 15], ["t", "identify"], ["t", "abacus"], ["t", "gear"], ["t", "sigma"], ["d", "table", 46, 1], ["d", "ruler", 45, 1],
  ["t", "annot"], ["xd", "playGear", 45, 1],
];
const ROW_TWO = [
  ["g", 13], ["t", "dataSrc"], ["t", "gpkg"], ["t", "newShape"], ["t", "feather"], ["t", "chip"], ["t", "mesh"], ["t", "virtual"],
  ["g", 14], ["x", "pencils"], ["t", "pencil"], ["x", "saveEdit"], ["xd", "digit", 45, 1], ["x", "dotsBadge"], ["xd", "tools", 45, 1],
  ["x", "editTable"], ["x", "trash"], ["x", "scissors"], ["x", "copy"], ["x", "paste"], ["x", "undo"], ["x", "redo"],
  ["g", 14], ["t", "label"], ["t", "diagram"], ["s", 8], ["t", "tagPin"], ["t", "tagRed"], ["s", 7],
  ["x", "tagPinOff"], ["x", "tagEye"], ["x", "tagArrow"], ["x", "tagRot"], ["x", "tagPen"],
  ["g", 17], ["t", "globe"], ["g", 17], ["t", "python"], ["g", 15], ["t", "help"], ["g", 15],
];
const ROW_THREE = [
  ["g", 13], ["t", "moveDiag"], ["x", "cross"], ["s", 7], ["t", "crossBlue"], ["x", "crossPlus"], ["t", "dotsBadgeGreen"],
  ["x", "pathOff"], ["s", 7], ["t", "info"], ["t", "wrench"],
];

const ToolStrip = ({ items, h }) => (
  <ToolRow $h={h}>
    {items.map(([kind, v, w, ml], i) => {
      if (kind === "g") return <Grip key={i} $w={v} />;
      if (kind === "s") return <Divider key={i} $w={v} />;
      const off = kind === "x" || kind === "xd";
      return (
        <Tool key={i} $w={w} $active={kind === "a"}>
          <ToolFace $off={off}>
            <Glyph n={v} />
          </ToolFace>
          {w && <DropArrow $ml={ml + 4} $off={off} />}
        </Tool>
      );
    })}
  </ToolRow>
);

const MENUS = [
  ["Pro", "j", "ect"], ["", "E", "dit"], ["", "V", "iew"], ["", "L", "ayer"], ["", "S", "ettings"], ["", "P", "lugins"],
  ["Vect", "o", "r"], ["", "R", "aster"], ["", "D", "atabase"], ["", "W", "eb"], ["", "M", "esh"], ["Pro", "c", "essing"], ["", "H", "elp"],
];

const TREE = [
  [0, null, "star", "Favorites"],
  [0, "r", "scrollSmall", "Spatial Bookmarks"],
  [0, "r", "home", "Home"],
  [0, "r", "folder", "C:\\"],
  [0, "r", "folder", "D:\\"],
  [0, null, "gpkgIcon", "GeoPackage"],
  [0, null, "featherIcon", "SpatiaLite"],
  [0, "d", "elephant", "PostgreSQL"],
  [1, "r", "conn", "本地环境 -  港口地图"],
  [1, "d", "conn", "本地虚拟机 - PostGis"],
  [2, "d", "db", "public"],
  [3, "r", "lineLayer", "temp_geometry"],
  [3, "r", "points", "temp_tb_geometry"],
  [3, "r", "points", "tmp_point", true],
  [3, "r", "polygonLayer", "tmp_polygon"],
  [3, "r", "points", "tmp_polygon"],
  [3, "r", "points", "veh_record.proj"],
  [3, "r", "polygonLayer", "veh_record.scope_box"],
  [2, "r", "db", "tiger"],
  [2, "r", "db", "tiger_data"],
];

const CaretMark = ({ dir }) =>
  dir === "r" ? (
    <svg width="6" height="10" viewBox="0 0 6 10"><path d="M1 1l4 4-4 4z" fill="#555" /></svg>
  ) : dir === "d" ? (
    <svg width="10" height="6" viewBox="0 0 10 6"><path d="M1 1h8L5 5z" fill="#555" /></svg>
  ) : null;

const DockControls = () => (
  <DockBtns>
    <DockBtn>
      <svg width="8" height="7" viewBox="0 0 8 7"><path d="M2.500 2V.5h5v4H6M.5 2.500h5v4h-5z" fill="none" stroke="#555" /></svg>
    </DockBtn>
    <DockBtn>
      <svg width="8" height="7" viewBox="0 0 8 7"><path d="M1 0l6 7M7 0L1 7" stroke="#333" strokeWidth="1.400" /></svg>
    </DockBtn>
  </DockBtns>
);

/* ---- map data, in the coordinates of the 1568 wide picture ---- */
const POINTS = [
  [457,245],[440,262],[428,287],[426,295],[444,298],[483,295],[618,241],[656,243],[611,276],[608,296],[621,317],[548,358],
  [753,234],[772,245],[729,265],[838,265],[864,232],[1048,258],[1065,281],[1133,266],[1036,304],[782,313],[781,329],[823,329],
  [835,341],[872,341],[963,323],[960,342],[980,343],[1214,325],[733,352],[753,364],[1066,358],[1077,369],[1091,358],[1132,384],
  [1136,394],[625,391],[720,394],[937,390],[1106,417],[608,432],[740,430],[1091,427],[438,442],[422,460],[439,458],[525,448],
  [860,440],[1200,445],[1219,445],[604,474],[552,486],[786,486],[860,492],[1014,484],[1139,473],[1131,487],[1080,491],[491,509],
  [578,518],[584,526],[691,505],[845,524],[876,519],[895,532],[952,529],[1006,524],[1017,509],[1029,505],[448,545],[541,555],
  [687,544],[794,544],[632,562],[702,564],[852,566],[503,572],[1207,549],[1109,577],[611,611],[990,606],[1022,603],[981,625],
  [1125,623],[498,623],[494,632],[582,644],[744,642],[420,642],[1052,639],[574,668],[616,662],[643,663],[476,672],[847,665],
  [885,670],[1065,666],[1180,659],[1080,677],
];
const SCALE = 1920 / 1568;

const MapView = () => (
  <svg width="1591" height="857" viewBox="329 164 1591 857">
    <rect x="494.500" y="282.500" width="1010.500" height="547.500" fill="#85b66f" stroke="#3f4a3b" strokeWidth="1.300" />
    <rect x="578.500" y="367" width="757.500" height="168" fill="none" stroke="#3f4a3b" strokeWidth="1.200" />
    {POINTS.map(([x, y], i) => (
      <circle key={i} cx={x * SCALE} cy={y * SCALE} r="3.800" fill="#ffee44" stroke="#2a2a2a" strokeWidth="1" />
    ))}
  </svg>
);

const QLogo = () => (
  <svg width="18" height="18" viewBox="0 0 18 18">
    <circle cx="8" cy="8" r="6" fill="none" stroke="#6fa843" strokeWidth="3.200" />
    <path d="M9 9l7 8" stroke="#e2b13c" strokeWidth="3.200" />
  </svg>
);

const Spin = () => (
  <FieldEnd $w={15}>
    <Arrow $up />
    <Arrow />
  </FieldEnd>
);

export default function App() {
  return (
    <Window>
      <GlobalStyle />
      <TitleBar>
        <QLogo />
        <TitleText>*Untitled Project — QGIS</TitleText>
        <WinButtons>
          <WinButton>
            <svg width="11" height="11" viewBox="0 0 11 11"><path d="M0 5.500h11" stroke="#111" /></svg>
          </WinButton>
          <WinButton>
            <svg width="11" height="11" viewBox="0 0 11 11"><path d="M2.500 2.500v-2h8v8h-2M.5 2.500h8v8h-8z" fill="none" stroke="#111" /></svg>
          </WinButton>
          <WinButton>
            <svg width="11" height="11" viewBox="0 0 11 11"><path d="M.5.5l10 10M10.500.5l-10 10" stroke="#111" /></svg>
          </WinButton>
        </WinButtons>
      </TitleBar>
      <MenuBar>
        {MENUS.map(([a, u, b]) => (
          <MenuItem key={a + u + b}>
            {a}
            <u>{u}</u>
            {b}
          </MenuItem>
        ))}
      </MenuBar>
      <ToolStrip items={ROW_ONE} />
      <ToolStrip items={ROW_TWO} />
      <ToolStrip items={ROW_THREE} h={38} />
      <Body>
        <Side>
          <DockHead>
            Browser
            <DockControls />
          </DockHead>
          <DockTools $h={31}>
            <DockTool $w={25}><Glyph n="addSquare" s={18} /></DockTool>
            <DockTool $w={25}><Glyph n="refresh" s={18} /></DockTool>
            <DockTool $w={25}><Glyph n="filter" s={18} /></DockTool>
            <DockTool $w={25}><Glyph n="collapse" s={18} /></DockTool>
            <DockTool $w={25}><Glyph n="info" s={18} /></DockTool>
          </DockTools>
          <TreeBox>
            <TreeRows>
              {TREE.map(([lvl, caret, icon, label, sel], i) => (
                <Row key={i} $lvl={lvl} $sel={sel}>
                  <Caret><CaretMark dir={caret} /></Caret>
                  <RowIcon><Glyph n={icon} s={lvl === 1 ? 14 : 18} /></RowIcon>
                  <RowLabel>{label}</RowLabel>
                </Row>
              ))}
            </TreeRows>
            <Scroll>
              <ScrollEnd><Arrow $up /></ScrollEnd>
              <ScrollTrack $h={206} />
              <ScrollThumb />
              <ScrollEnd><Arrow /></ScrollEnd>
            </Scroll>
          </TreeBox>
          <Splitter />
          <DockHead>
            Layers
            <DockControls />
          </DockHead>
          <DockTools $h={30}>
            <DockTool $w={24}><Glyph n="brush" s={18} /></DockTool>
            <DockTool $w={26}><Glyph n="addGroup" s={18} /></DockTool>
            <DockTool $w={26}><Glyph n="eye" s={18} /></DockTool>
            <DockTool $w={25}><Glyph n="filterDrop" s={18} /></DockTool>
            <DockTool $w={26}><Glyph n="epsilon" s={18} /></DockTool>
            <DockTool $w={10}><DropArrow $ml={0} /></DockTool>
            <DockTool $w={25}><Glyph n="expand" s={18} /></DockTool>
            <DockTool $w={26}><Glyph n="collapse" s={18} /></DockTool>
            <DockTool $w={24}><Glyph n="removeSquare" s={18} /></DockTool>
          </DockTools>
          <LayerBox>
            <LayerRow $h={20} $sel>
              <Check><Glyph n="tick" s={11} /></Check>
              <Swatch>
                <svg width="8" height="8" viewBox="0 0 8 8"><circle cx="4" cy="4" r="3" fill="#ffee44" stroke="#555" /></svg>
              </Swatch>
              <LayerName><u>tmp_point</u></LayerName>
              <Unknown>?</Unknown>
            </LayerRow>
            <LayerRow $h={19}>
              <Check><Glyph n="tick" s={11} /></Check>
              <Swatch $fill="#85b66f" />
              <LayerName>tmp_polygon</LayerName>
              <Unknown>?</Unknown>
            </LayerRow>
          </LayerBox>
        </Side>
        <MapCanvas>
          <MapView />
        </MapCanvas>
      </Body>
      <StatusBar>
        <Locator>
          <Search size={15} color="#888" strokeWidth={1.6} />
          Type to locate (Ctrl+K)
        </Locator>
        <StatLabel $ml={830}>Coordinate</StatLabel>
        <Field $w={96}>84.2° , 100.1°</Field>
        <StatIcon $ml={3}><Glyph n="crsOff" s={16} /></StatIcon>
        <StatLabel $ml={14}>Scale</StatLabel>
        <Field $w={81} $pad={0}>
          1:31381506
          <FieldEnd $w={20}><Arrow /></FieldEnd>
        </Field>
        <StatIcon $ml={11}><Lock size={16} color="#666" fill="#666" /></StatIcon>
        <StatLabel $ml={7}>Magnifier</StatLabel>
        <Field $w={88}>
          100%
          <Spin />
        </Field>
        <StatLabel $ml={9}>Rotation</StatLabel>
        <Field $w={88} $ml={10}>
          0.0 °
          <Spin />
        </Field>
        <StatCheck><Glyph n="tick" s={11} /></StatCheck>
        <StatLabel $ml={5}>Render</StatLabel>
        <StatIcon $ml={16}><Glyph n="epsg" s={13} /></StatIcon>
        <StatLabel $ml={5}>EPSG:4326</StatLabel>
      </StatusBar>
      <Watermark>CSDN @<WatermarkName>混世小萌羊</WatermarkName></Watermark>
      <WatermarkBubble>
        <svg width="19" height="17" viewBox="0 0 19 17">
          <path d="M9.500 0C4 0 0 3.300 0 7.500c0 2.400 1.300 4.400 3.400 5.800L2.800 17l4-2.300c.9.200 1.800.3 2.700.3 5.500 0 9.500-3.300 9.500-7.500S15 0 9.500 0z" fill="#444" />
          <circle cx="6" cy="7.500" r="1.300" fill="#fff" />
          <circle cx="13" cy="7.500" r="1.300" fill="#fff" />
        </svg>
      </WatermarkBubble>
    </Window>
  );
}
